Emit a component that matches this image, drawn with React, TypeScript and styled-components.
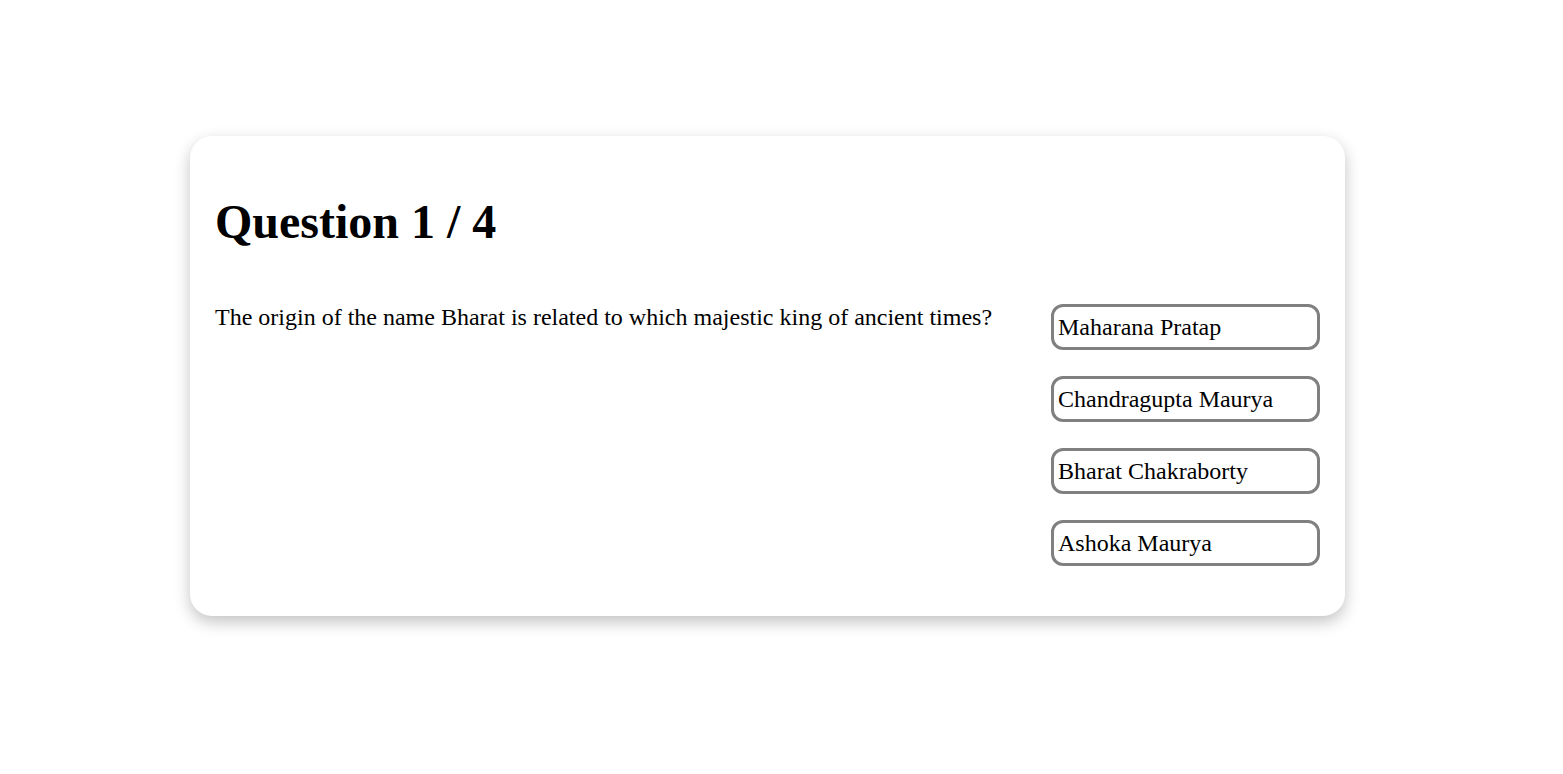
import React from "react";
import styled, { createGlobalStyle } from "styled-components";

const GlobalStyle = createGlobalStyle`
  html, body {
    margin: 0;
    padding: 0;
    background: #ffffff;
    font-family: "Liberation Serif", "Times New Roman", serif;
    color: #000000;
  }
`;

const Page = styled.div`
  box-sizing: border-box;
  min-height: 100vh;
  display: flex;
  align-items: flex-start;
  padding: 136px 0 60px 190px;
`;

const Card = styled.div`
  box-sizing: border-box;
  width: 1155px;
  height: 480px;
  padding: 58px 25px 0 25px;
  background: #ffffff;
  border-radius: 22px;
  box-shadow: 0 6px 16px rgba(0, 0, 0, 0.24);
  display: flex;
  flex-direction: column;
`;

const Heading = styled.h1`
  margin: 0;
  font-size: 48px;
  line-height: 56px;
  font-weight: 700;
`;

const Row = styled.div`
  display: flex;
  justify-content: space-between;
  align-items: flex-start;
  margin-top: 53px;
`;

const QuestionText = styled.div`
  font-size: 24px;
  line-height: 28px;
`;

const Options = styled.div`
  display: flex;
  flex-direction: column;
  gap: 26px;
  padding-top: 1px;
`;

const Option = styled.button`
  box-sizing: border-box;
  width: 269px;
  height: 46px;
  padding: 4px 4px 5px 4px;
  border: 3px solid #808080;
  border-radius: 12px;
  background: #ffffff;
  font-family: "Liberation Serif", "Times New Roman", serif;
  font-size: 24px;
  line-height: 28px;
  color: #000000;
  text-align: left;
  cursor: pointer;
`;

const options = [
  "Maharana Pratap",
  "Chandragupta Maurya",
  "Bharat Chakraborty",
  "Ashoka Maurya",
];

export default function App() {
  return (
    <>
      <GlobalStyle />
      <Page>
        <Card>
          <Heading>Question 1 / 4</Heading>
          <Row>
            <QuestionText>
              The origin of the name Bharat is related to which majestic king of ancient times?
            </QuestionText>
            <Options>
              {options.map((o) => (
                <Option key={o}>{o}</Option>
              ))}
            </Options>
          </Row>
        </Card>
      </Page>
    </>
  );
}
